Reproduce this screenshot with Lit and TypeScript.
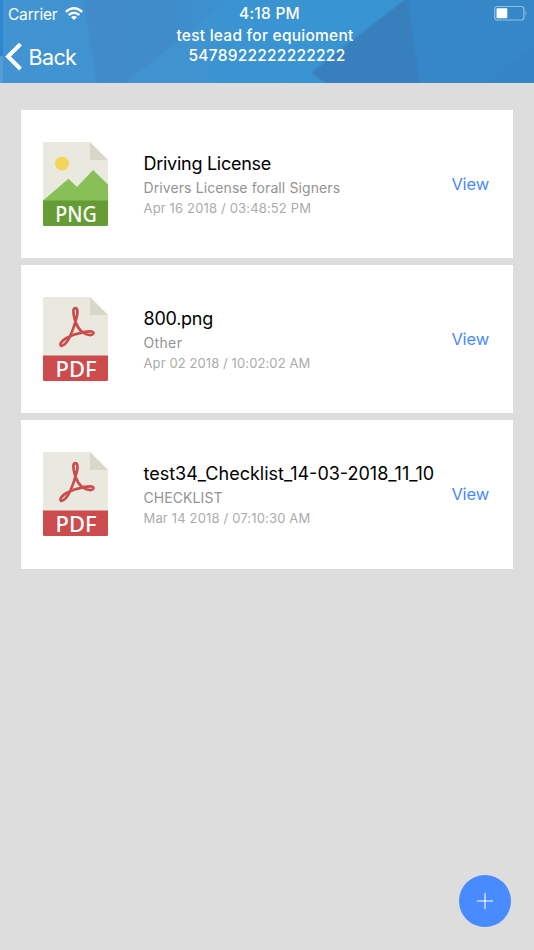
import { LitElement, html, css, svg } from "lit";
import { customElement, property } from "lit/decorators.js";

interface Doc {
  kind: "png" | "pdf";
  title: string;
  category: string;
  date: string;
  ls: number[];
}

const DOCS: Doc[] = [
  { kind: "png", title: "Driving License", category: "Drivers License forall Signers", date: "Apr 16 2018 / 03:48:52 PM", ls: [-0.27, 0.1, 0.16] },
  { kind: "pdf", title: "800.png", category: "Other", date: "Apr 02 2018 / 10:02:02 AM", ls: [-0.25, 0.35, 0.1] },
  { kind: "pdf", title: "test34_Checklist_14-03-2018_11_10", category: "CHECKLIST", date: "Mar 14 2018 / 07:10:30 AM", ls: [0, 0.08, 0.16] },
];

@customElement("file-icon")
class FileIcon extends LitElement {
  @property() kind = "pdf";
  static styles = css`
    :host { display: block; width: 65px; height: 84px; }
    svg { display: block; overflow: visible; }
    .label { font: 500 21px "Noto Sans", "Open Sans", sans-serif; fill: #fff; }
  `;
  render() {
    const png = this.kind === "png";
    return html`<svg width="65" height="84" viewBox="0 0 65 84">
      <path d="M1.5 0H47L65 18V60H0V1.5Q0 0 1.5 0Z" fill="#e9e9e0" />
      <path d="M47 0L65 18H47Z" fill="#d9d7ca" />
      ${png
        ? svg`<circle cx="19" cy="21.5" r="7" fill="#f3d55b" />
            <path d="M0 58.5L25.5 36.8L34 45L50 28L65 42.500V59H0Z" fill="#88c057" />`
        : svg`<path d="M32.200 11.200C35.300 11.200 34.800 17 33.200 22C31.500 28.500 29.500 34 27 39.500C24.500 45 20.500 49.300 18.300 48.900C16 48 18.500 43.600 23.500 41C29 38.100 36 35.800 42 34.800C48 33.900 50.800 34.300 50.400 36.300C49.800 38.800 44.500 38.600 40 35.700C36 32.900 33.400 28 31.800 22.500C30.100 16.500 29.600 11.200 32.200 11.200Z" fill="none" stroke="#cc4b4c" stroke-width="2.700" stroke-linejoin="round" />`}
      <path d="M0 58.600H65V82.500Q65 84 63.500 84H1.500Q0 84 0 82.500Z" fill=${png ? "#659c35" : "#cc4b4c"} />
      <text class="label" x="33" y="79.600" text-anchor="middle" textLength=${png ? 41.5 : 41} lengthAdjust="spacingAndGlyphs">${png ? "PNG" : "PDF"}</text>
    </svg>`;
  }
}

@customElement("doc-card")
class DocCard extends LitElement {
  @property({ attribute: false }) doc!: Doc;
  static styles = css`
    :host {
      display: flex; align-items: center; box-sizing: border-box; height: 148.250px;
      padding: 0 24px 0 22px; background: #fff; white-space: nowrap;
    }
    .info { margin-left: 35.500px; flex: 1; min-width: 0; padding-top: 2px; }
    .title { font-size: 18px; line-height: 24px; color: #000; }
    .category { font-size: 14px; line-height: 20px; margin-top: 2px; color: #939393; }
    .date { font-size: 13px; line-height: 20px; color: #ababab; }
    .view { font-size: 16.500px; line-height: 22px; letter-spacing: -0.150px; color: #488aff; padding-bottom: 0.500px; }
  `;
  render() {
    const d = this.doc;
    return html`<file-icon .kind=${d.kind}></file-icon>
      <div class="info">
        <div class="title"><span style="letter-spacing:${d.ls[0]}px">${d.title}</span></div>
        <div class="category"><span style="letter-spacing:${d.ls[1]}px">${d.category}</span></div>
        <div class="date"><span style="letter-spacing:${d.ls[2]}px">${d.date}</span></div>
      </div>
      <div class="view">View</div>`;
  }
}

@customElement("app-root")
class AppRoot extends LitElement {
  static styles = css`
    :host {
      display: flex; flex-direction: column; position: relative; height: 950px;
      background: #dddddd; font-family: Inter, "Liberation Sans", sans-serif; overflow: hidden;
    }
    header { position: relative; height: 83px; color: #fff; }
    .facets { position: absolute; inset: 0; width: 100%; height: 100%; }
    .bar { position: relative; display: grid; grid-template-columns: 170px 1fr 170px; height: 83px; }
    .status { display: flex; align-items: center; gap: 8px; height: 28px; padding-left: 8px; font-size: 15.500px; letter-spacing: -0.200px; }
    .status svg { margin-bottom: 2px; }
    .back { display: flex; align-items: center; gap: 6.500px; height: 57px; padding-left: 5px; font-size: 21.500px; letter-spacing: -0.600px; }
    .center { display: flex; flex-direction: column; align-items: center; white-space: nowrap; font-weight: 500; font-size: 15.500px; }
    .time { line-height: 28px; letter-spacing: 0.250px; padding-left: 5px; }
    .heading { line-height: 19.500px; margin-top: -2px; padding-right: 4px; letter-spacing: 0.250px; }
    .number { line-height: 19.500px; letter-spacing: 0.250px; }
    .battery { justify-self: end; padding: 5px 6px 0 0; }
    main { display: flex; flex-direction: column; gap: 7px; padding: 26.750px 21px; }
    .fab {
      position: absolute; left: 459px; top: 875px; width: 52px; height: 52px; border: 0; padding: 0;
      border-radius: 50%; background: #488aff; display: grid; place-items: center;
    }
  `;
  render() {
    return html`<header>
        <svg class="facets" viewBox="0 0 534 83" preserveAspectRatio="none">
          <defs>
            <linearGradient id="base"><stop offset="0" stop-color="#4193d1" /><stop offset=".35" stop-color="#4193d0" /><stop offset=".42" stop-color="#3a94d1" /><stop offset="1" stop-color="#3695d2" /></linearGradient>
            <linearGradient id="shade" gradientUnits="userSpaceOnUse" x1="83" y1="0" x2="235" y2="0"><stop offset="0" stop-color="#408bc8" /><stop offset=".55" stop-color="#3f8cca" /><stop offset="1" stop-color="#3994d1" /></linearGradient>
            <filter id="soft" x="-5%" y="-5%" width="110%" height="110%"><feGaussianBlur stdDeviation="1.200" /></filter>
          </defs>
          <path d="M0 0H534V83H0Z" fill="url(#base)" />
          <g filter="url(#soft)">
            <path d="M83 -6H235L197 26L122 85H97Z" fill="url(#shade)" />
            <path d="M412 -6L350 42L311 73L334 89H424L412 -6Z" fill="#377fbd" />
            <path d="M407 -6H544V89H420Z" fill="#3587c8" />
            <path d="M544 38L478 89H544Z" fill="#3484c6" />
          </g>
          <path d="M0 0H3V56H0Z" fill="#2c85d0" /><path d="M0 56H3V83H0Z" fill="#599bd5" />
        </svg>
        <div class="bar">
          <div>
            <div class="status"><span>Carrier</span>
              <svg width="18" height="13" viewBox="0 0 18 13"><path d="M.8 4.800Q9-2.200 17.200 4.800M3.700 8Q9 3.600 14.300 8" fill="none" stroke="#fff" stroke-width="2.300" /><path d="M6 10.300Q9 7.600 12 10.300L9 13Z" fill="#fff" /></svg>
            </div>
            <div class="back"><svg width="17" height="28" viewBox="0 0 17 28"><path d="M15.500 1L3 13.500L15.500 26" fill="none" stroke="#fff" stroke-width="4" /></svg><span>Back</span></div>
          </div>
          <div class="center">
            <span class="time">4:18 PM</span>
            <span class="heading">test lead for equioment</span>
            <span class="number">5478922222222222</span>
          </div>
          <svg class="battery" width="34" height="16" viewBox="0 0 34 16"><rect x=".7" y="1.500" width="29.200" height="13.500" rx="2.500" fill="none" stroke="#93bfe2" stroke-width="1.200" /><rect x="2.500" y="3.200" width="10.800" height="10" rx=".6" fill="#fff" /><path d="M31.500 6Q33.500 8 31.500 10.500Z" fill="#93bfe2" /></svg>
        </div>
      </header>
      <main>${DOCS.map((d) => html`<doc-card .doc=${d}></doc-card>`)}</main>
      <button class="fab" aria-label="Add"><svg width="16" height="16" viewBox="0 0 16 16"><path d="M8 0V16M0 8H16" stroke="#fff" stroke-width="1.100" /></svg></button>`;
  }
}
